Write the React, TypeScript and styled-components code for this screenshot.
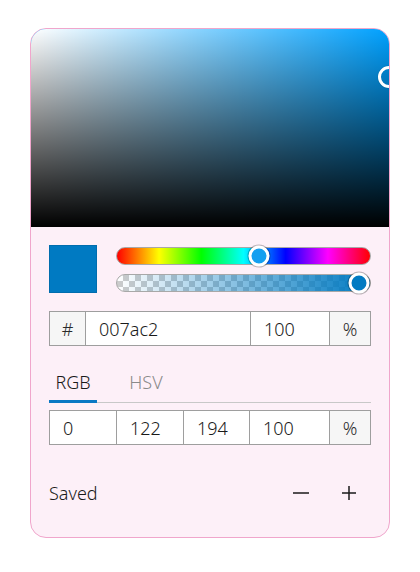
import React, { useState } from 'react'
import styled, { createGlobalStyle } from 'styled-components'

const GlobalStyle = createGlobalStyle`
  body {
    margin: 0;
    background: #ffffff;
    font-family: 'Noto Sans', 'Open Sans', sans-serif;
    font-weight: 300;
    color: #1a1a1a;
  }
`

const hex = '007ac2'
const hue = 202
const sat = 1
const val = 0.76
const alpha = 1

export default function App () {
  const [tab, setTab] = useState<'RGB' | 'HSV'>('RGB')

  return (
    <Page>
      <GlobalStyle />
      <Card>
        <Saturation hue={hue}>
          <PanelThumb style={{ left: `${sat * 100}%`, top: `${(1 - val) * 100}%` }} />
        </Saturation>
        <Body>
          <SwatchRow>
            <Swatch color={'#' + hex} />
            <Sliders>
              <HueTrack>
                <Thumb fill='#149ff0' style={{ left: `${(hue / 360) * 100}%` }} />
              </HueTrack>
              <AlphaTrack color={'#' + hex}>
                <Thumb fill={'#' + hex} style={{ left: `calc(${alpha * 100}% - ${alpha * 11}px)` }} />
              </AlphaTrack>
            </Sliders>
          </SwatchRow>

          <FieldRow cols='35px 1fr 79px 41px'>
            <Label>#</Label>
            <Value>{hex}</Value>
            <Value>100</Value>
            <Label>%</Label>
          </FieldRow>

          <Tabs>
            <Tab active={tab === 'RGB'} onClick={() => setTab('RGB')}>RGB</Tab>
            <Tab active={tab === 'HSV'} onClick={() => setTab('HSV')}>HSV</Tab>
          </Tabs>

          <FieldRow cols='66px 67px 66px 80px 1fr' gap={7}>
            <Value>0</Value>
            <Value>122</Value>
            <Value>194</Value>
            <Value>100</Value>
            <Label>%</Label>
          </FieldRow>

          <Footer>
            <span>Saved</span>
            <Actions>
              <IconButton aria-label='remove'>
                <svg width='18' height='18' viewBox='0 0 18 18'>
                  <path d='M1 9h16' stroke='#1a1a1a' strokeWidth='1.5' />
                </svg>
              </IconButton>
              <IconButton aria-label='add'>
                <svg width='18' height='18' viewBox='0 0 18 18'>
                  <path d='M2 9h14M9 2v14' stroke='#1a1a1a' strokeWidth='1.5' />
                </svg>
              </IconButton>
            </Actions>
          </Footer>
        </Body>
      </Card>
    </Page>
  )
}

const Page = styled.div`
  padding: 28px 30px;
`

const Card = styled.div`
  width: 360px;
  height: 510px;
  box-sizing: border-box;
  border: 1px solid #f0a6cc;
  border-radius: 16px;
  background: #fdf0f8;
  overflow: hidden;
`

const Saturation = styled.div<{ hue: number }>`
  position: relative;
  height: 198px;
  background:
    linear-gradient(to top, #000000, rgba(0, 0, 0, 0)),
    linear-gradient(to right, #ffffff, rgba(255, 255, 255, 0)),
    hsl(${p => p.hue}, 100%, 50%);
`

const PanelThumb = styled.div`
  position: absolute;
  width: 16px;
  height: 16px;
  border: 3px solid #ffffff;
  border-radius: 50%;
  transform: translate(-50%, -50%);
  box-shadow: 0 0 1px rgba(0, 0, 0, 0.4);
`

const Body = styled.div`
  padding: 18px 18px 0 18px;
`

const SwatchRow = styled.div`
  display: flex;
  align-items: center;
  gap: 19px;
`

const Swatch = styled.div<{ color: string }>`
  width: 48px;
  height: 48px;
  box-sizing: border-box;
  background: ${p => p.color};
  border: 1px solid rgba(0, 0, 0, 0.1);
`

const Sliders = styled.div`
  flex: 1;
  display: flex;
  flex-direction: column;
  gap: 9px;
`

const Track = styled.div`
  position: relative;
  height: 18px;
  box-sizing: border-box;
  border: 1px solid #a8a8a8;
  border-radius: 9px;
`

const HueTrack = styled(Track)`
  background: linear-gradient(to right, #ff0000, #ffff00 16.66%, #00ff00 33.33%, #00ffff 50%, #0000ff 66.66%, #ff00ff 83.33%, #ff0000);
`

const AlphaTrack = styled(Track)<{ color: string }>`
  background:
    linear-gradient(to right, rgba(0, 122, 194, 0), ${p => p.color}),
    repeating-conic-gradient(#cccccc 0% 25%, #ffffff 0% 50%) 0 0 / 12px 12px;
`

const Thumb = styled.div<{ fill: string }>`
  position: absolute;
  top: 50%;
  width: 21px;
  height: 21px;
  box-sizing: border-box;
  border: 3px solid #ffffff;
  border-radius: 50%;
  background: ${p => p.fill};
  transform: translate(-50%, -50%);
  box-shadow: 0 0 0 1px rgba(0, 0, 0, 0.25);
`

const FieldRow = styled.div<{ cols: string, gap?: number }>`
  display: grid;
  grid-template-columns: ${p => p.cols};
  height: 35px;
  margin-top: ${p => p.gap ?? 18}px;
  border: 1px solid #9e9e9e;
  box-sizing: border-box;
  background: #ffffff;
  & > * + * {
    border-left: 1px solid #9e9e9e;
  }
`

const Cell = styled.div`
  display: flex;
  align-items: center;
  font-size: 18px;
  color: #1a1a1a;
`

const Label = styled(Cell)`
  justify-content: center;
  background: #f6f6f6;
  color: #2a2a2a;
`

const Value = styled(Cell)`
  padding-left: 13px;
`

const Tabs = styled.div`
  display: flex;
  gap: 25px;
  margin-top: 18px;
  border-bottom: 1px solid #c8c8c8;
`

const Tab = styled.div<{ active: boolean }>`
  width: 48px;
  height: 39px;
  box-sizing: border-box;
  display: flex;
  align-items: center;
  justify-content: center;
  font-size: 18px;
  color: ${p => (p.active ? '#1a1a1a' : '#8a8a8a')};
  border-bottom: 3px solid ${p => (p.active ? '#0a79c4' : 'transparent')};
  margin-bottom: -1px;
  cursor: pointer;
`

const Footer = styled.div`
  display: flex;
  align-items: center;
  justify-content: space-between;
  height: 36px;
  margin-top: 30px;
  font-size: 18px;
  color: #1a1a1a;
`

const Actions = styled.div`
  display: flex;
  gap: 16px;
  margin-right: 6px;
`

const IconButton = styled.button`
  width: 32px;
  height: 32px;
  border: none;
  background: transparent;
  padding: 0;
  display: flex;
  align-items: center;
  justify-content: center;
  cursor: pointer;
`
